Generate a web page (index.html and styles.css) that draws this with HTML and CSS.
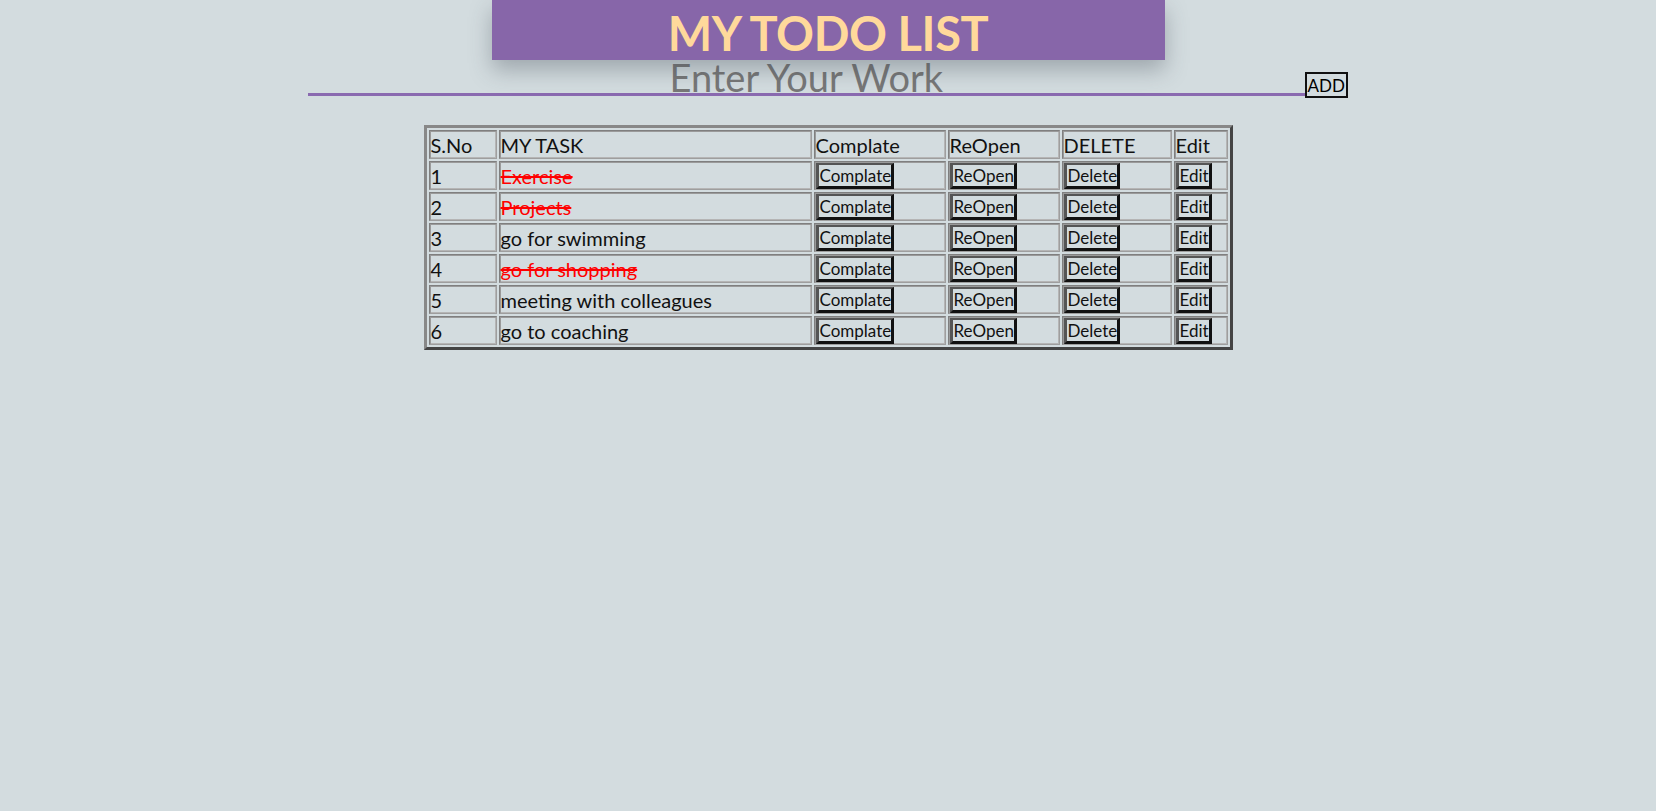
FILE: index.html
```html
<!DOCTYPE html>
<html>
<head>
<meta charset="utf-8">
<link rel="stylesheet" href="styles.css">
<title>My Todo List</title>
</head>
<body>
<header class="banner">
  <h1 class="title">MY TODO LIST</h1>
</header>
<div class="entry">
  <input class="work-input" type="text" placeholder="Enter Your Work">
  <button class="add-btn">ADD</button>
</div>
<table class="tasks">
  <colgroup>
    <col class="c-no"><col class="c-task"><col class="c-comp"><col class="c-re"><col class="c-del"><col class="c-edit">
  </colgroup>
  <thead>
    <tr><th>S.No</th><th>MY TASK</th><th>Complate</th><th>ReOpen</th><th>DELETE</th><th>Edit</th></tr>
  </thead>
  <tbody>
    <tr><td>1</td><td><span class="done">Exercise</span></td><td><button class="act">Complate</button></td><td><button class="act">ReOpen</button></td><td><button class="act">Delete</button></td><td><button class="act">Edit</button></td></tr>
    <tr><td>2</td><td><span class="done">Projects</span></td><td><button class="act">Complate</button></td><td><button class="act">ReOpen</button></td><td><button class="act">Delete</button></td><td><button class="act">Edit</button></td></tr>
    <tr><td>3</td><td>go for swimming</td><td><button class="act">Complate</button></td><td><button class="act">ReOpen</button></td><td><button class="act">Delete</button></td><td><button class="act">Edit</button></td></tr>
    <tr><td>4</td><td><span class="done">go for shopping</span></td><td><button class="act">Complate</button></td><td><button class="act">ReOpen</button></td><td><button class="act">Delete</button></td><td><button class="act">Edit</button></td></tr>
    <tr><td>5</td><td>meeting with colleagues</td><td><button class="act">Complate</button></td><td><button class="act">ReOpen</button></td><td><button class="act">Delete</button></td><td><button class="act">Edit</button></td></tr>
    <tr><td>6</td><td>go to coaching</td><td><button class="act">Complate</button></td><td><button class="act">ReOpen</button></td><td><button class="act">Delete</button></td><td><button class="act">Edit</button></td></tr>
  </tbody>
</table>
</body>
</html>
```
FILE: styles.css
```css
html, body {
  margin: 0;
  padding: 0;
}
body {
  background: #d3dcdf;
  font-family: Lato, "Noto Sans", sans-serif;
  color: #111;
  min-height: 811px;
}
.banner {
  width: 673px;
  height: 60px;
  margin: 0 auto;
  background: #8766a9;
  box-shadow: 0 10px 22px rgba(60, 70, 80, 0.35);
  display: flex;
  align-items: center;
  justify-content: center;
  position: relative;
  z-index: 1;
}
.title {
  margin: 0;
  font-size: 47px;
  font-weight: 700;
  color: #ffd99b;
  letter-spacing: -0.4px;
  line-height: 1;
  padding-top: 7px;
}
.entry {
  display: flex;
  justify-content: center;
  align-items: flex-end;
}
.work-input {
  width: calc(60% + 3px);
  box-sizing: border-box;
  border: none;
  border-bottom: 3px solid #8a6ab0;
  background: transparent;
  font-family: Lato, "Noto Sans", sans-serif;
  font-size: 38px;
  line-height: 1;
  height: 36px;
  padding: 0;
  text-align: center;
  color: #777;
  outline: none;
  overflow: visible;
}
.work-input::placeholder {
  color: #777;
  opacity: 1;
}
.add-btn {
  font-family: Lato, "Noto Sans", sans-serif;
  font-size: 17px;
  height: 26px;
  padding: 0 1px;
  margin-bottom: -2px;
  background: #d3dcdf;
  border: 2px solid #111;
  color: #000;
  line-height: 1;
}
.tasks {
  margin: 29px auto 0;
  border-collapse: separate;
  border-spacing: 2px;
  border-style: solid;
  border-width: 3px;
  border-color: #888 #444 #444 #888;
  font-size: 20px;
}
.c-no { width: 68px; }
.c-task { width: 313px; }
.c-comp { width: 132px; }
.c-re { width: 112px; }
.c-del { width: 110px; }
.c-edit { width: 54px; }
.tasks th, .tasks td {
  box-sizing: border-box;
  height: 29px;
  padding: 0 1px;
  text-align: left;
  font-weight: 400;
  border: 1px solid;
  border-color: #7f7f7f #9e9e9e #9e9e9e #7f7f7f;
  box-shadow: inset 1px 1px 0 #9a9a9a, inset -1px -1px 0 #b5b5b5;
  white-space: nowrap;
  vertical-align: middle;
  line-height: 1;
}
.done {
  color: #ff0000;
  text-decoration: line-through;
}
.act {
  font-family: Lato, "Noto Sans", sans-serif;
  font-size: 17px;
  color: #111;
  background: #d3dcdf;
  padding: 2px 0 2px 1px;
  border-style: solid;
  border-width: 2px 3px 3px 3px;
  border-color: #555 #111 #111 #555;
  line-height: 1;
  overflow: hidden;
  vertical-align: middle;
}
```
